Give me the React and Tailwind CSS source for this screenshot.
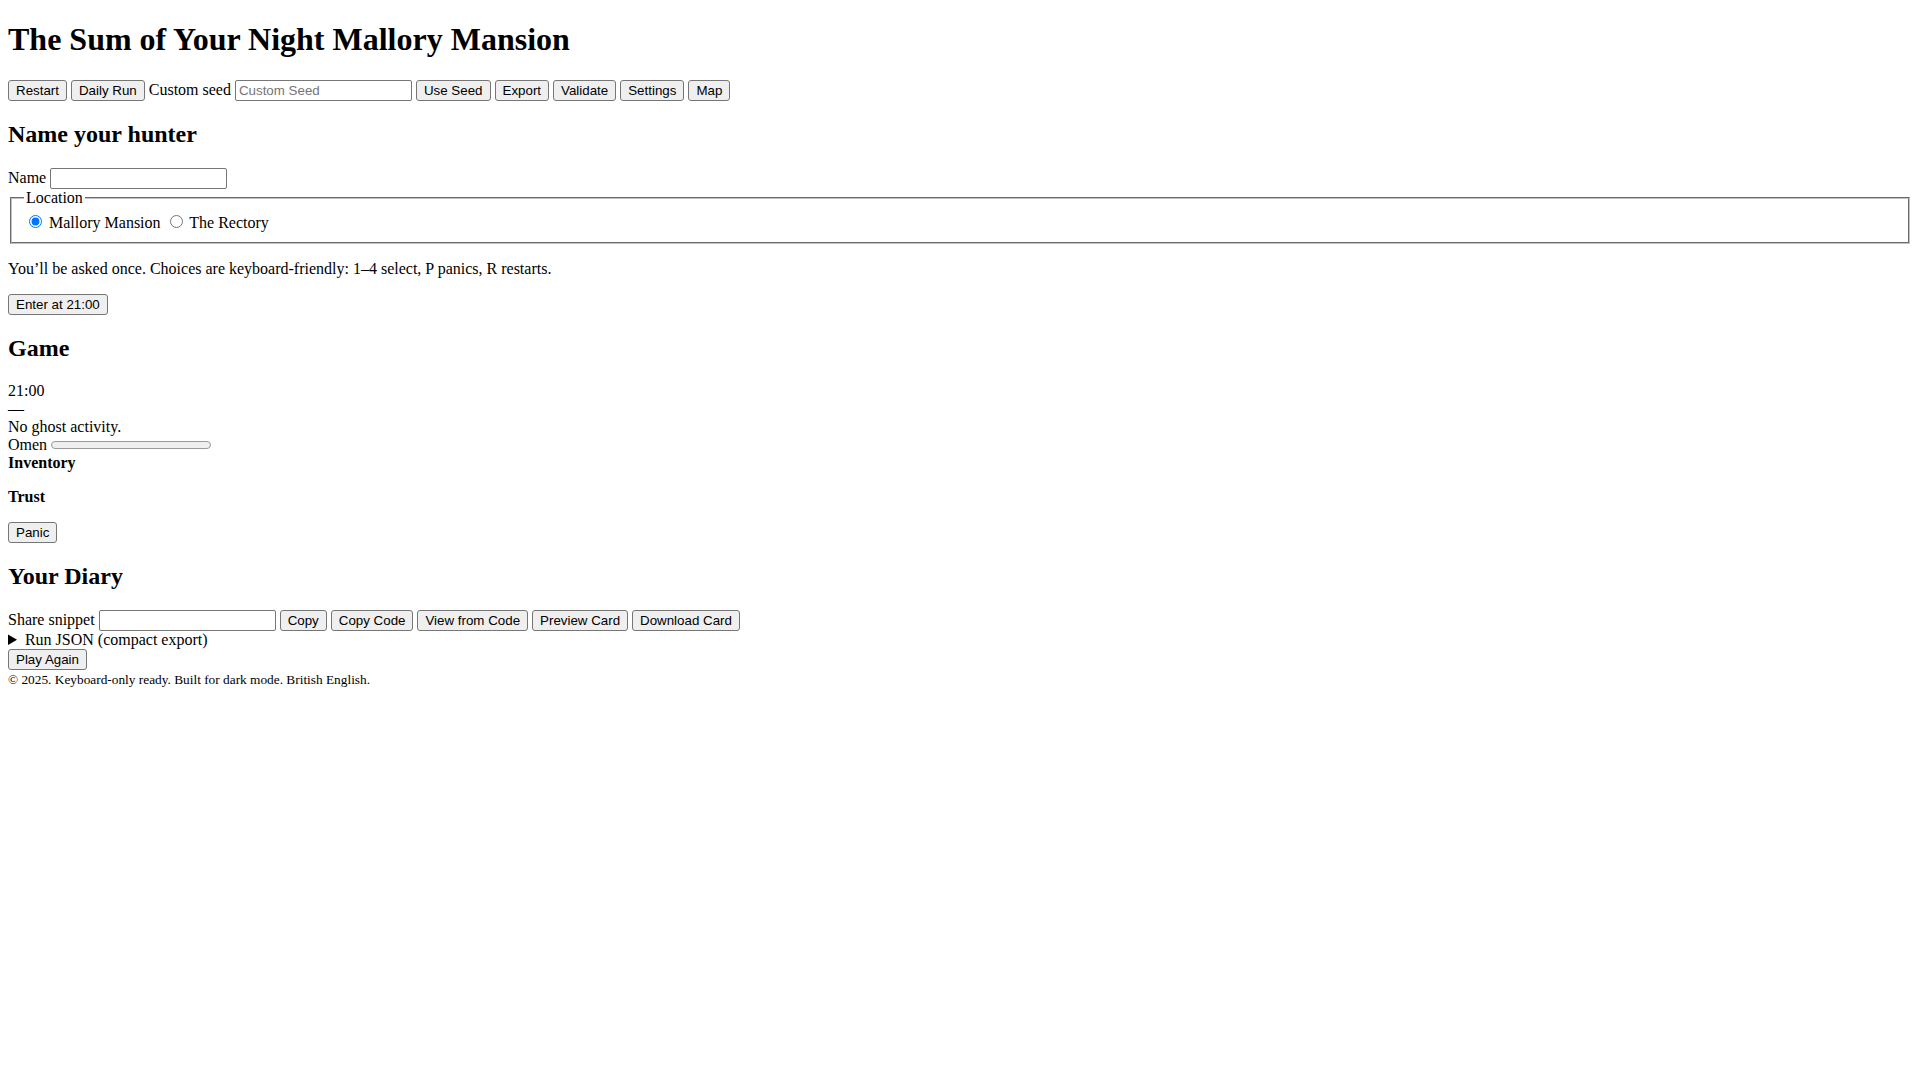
import React from "react";

const btn =
  "inline-block bg-[#efefef] border border-[#767676] rounded-[3px] px-[7px] py-[2px] text-[13.333px] leading-[normal] font-['Liberation_Sans',Arial,sans-serif] text-black";
const inp =
  "inline-block w-[177px] bg-white border border-[#767676] rounded-[2px] px-[3px] py-[2px] text-[13.333px] leading-[normal] font-['Liberation_Sans',Arial,sans-serif] text-black placeholder:text-[#757575]";
const h2 = "text-[24px] font-bold my-[19.92px]";

export default function App() {
  return (
    <div className="m-[8px] font-['Liberation_Serif','Times_New_Roman',serif] text-[16px] leading-[normal] text-black bg-white">
      <header>
        <h1 className="text-[32px] font-bold my-[21.44px]">The Sum of Your Night Mallory Mansion</h1>
        <div>
          <button className={btn}>Restart</button>{" "}
          <button className={btn}>Daily Run</button>{" "}
          <label>
            Custom seed <input className={inp} placeholder="Custom Seed" />
          </label>{" "}
          <button className={btn}>Use Seed</button>{" "}
          <button className={btn}>Export</button>{" "}
          <button className={btn}>Validate</button>{" "}
          <button className={btn}>Settings</button>{" "}
          <button className={btn}>Map</button>
        </div>
      </header>

      <section>
        <h2 className={h2}>Name your hunter</h2>
        <div>
          <label>
            Name <input className={inp} />
          </label>
        </div>
        <fieldset className="mx-[2px] pt-[5.6px] px-[12px] pb-[10px] border-2 [border-style:groove] border-[#c0c0c0]">
          <legend className="px-[2px]">Location</legend>
          <label>
            <input type="radio" name="loc" defaultChecked className="m-[3px_3px_0_5px]" /> Mallory Mansion
          </label>{" "}
          <label>
            <input type="radio" name="loc" className="m-[3px_3px_0_5px]" /> The Rectory
          </label>
        </fieldset>
        <p className="my-[16px]">
          You’ll be asked once. Choices are keyboard-friendly: 1–4 select, P panics, R restarts.
        </p>
        <div>
          <button className={btn}>Enter at 21:00</button>
        </div>
      </section>

      <section>
        <h2 className={h2}>Game</h2>
        <div>21:00</div>
        <div>—</div>
        <div>No ghost activity.</div>
        <div>
          Omen{" "}
          <span
            role="progressbar"
            aria-valuenow={0}
            className="inline-block w-[160px] h-[16px] py-[4px] align-[-0.2em]"
          >
            <span className="block h-[8px] rounded-full border border-[#9a9a9a] bg-[#efefef]"></span>
          </span>
        </div>
        <div className="mb-[16px]">
          <strong>Inventory</strong>
        </div>
        <div className="mb-[16px]">
          <strong>Trust</strong>
        </div>
        <div>
          <button className={btn}>Panic</button>
        </div>
      </section>

      <section>
        <h2 className={h2}>Your Diary</h2>
        <div>
          <label>
            Share snippet <input className={inp} />
          </label>{" "}
          <button className={btn}>Copy</button>{" "}
          <button className={btn}>Copy Code</button>{" "}
          <button className={btn}>View from Code</button>{" "}
          <button className={btn}>Preview Card</button>{" "}
          <button className={btn}>Download Card</button>
        </div>
        <details>
          <summary>Run JSON (compact export)</summary>
        </details>
        <div>
          <button className={btn}>Play Again</button>
        </div>
      </section>

      <footer>
        <small className="text-[13.333px]">© 2025. Keyboard-only ready. Built for dark mode. British English.</small>
      </footer>
    </div>
  );
}
